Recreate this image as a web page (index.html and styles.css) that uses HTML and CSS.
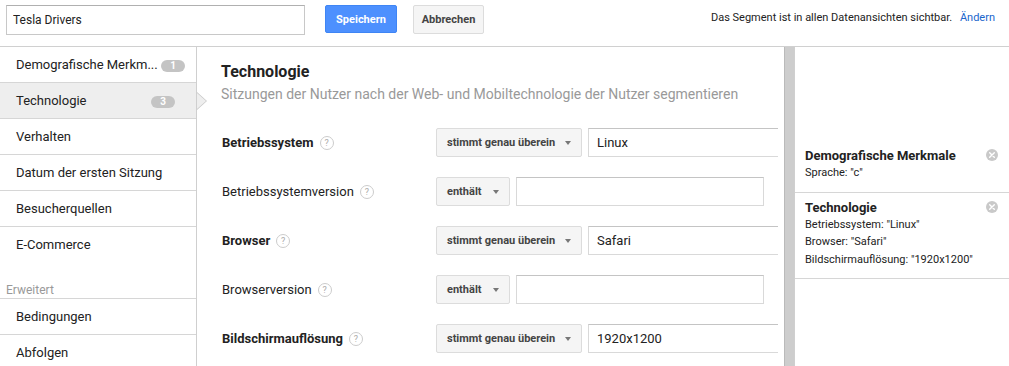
FILE: index.html
```html
<!DOCTYPE html>
<html lang="de">
<head>
<meta charset="utf-8">
<title>Segment</title>
<link rel="stylesheet" href="styles.css">
</head>
<body>
<header class="topbar">
  <input class="name-input" type="text" value="Tesla Drivers">
  <button class="btn btn-primary">Speichern</button>
  <button class="btn btn-default">Abbrechen</button>
  <div class="visibility">Das Segment ist in allen Datenansichten sichtbar. <a class="link">Ändern</a></div>
</header>
<div class="workspace">
  <nav class="nav">
    <div class="nav-item"><span class="nav-label" title="Demografische Merkmale">Demografische Merkm...</span><span class="badge">1</span></div>
    <div class="nav-item active"><span class="nav-label">Technologie</span><span class="badge">3</span></div>
    <div class="nav-item"><span class="nav-label">Verhalten</span></div>
    <div class="nav-item"><span class="nav-label">Datum der ersten Sitzung</span></div>
    <div class="nav-item"><span class="nav-label">Besucherquellen</span></div>
    <div class="nav-item last"><span class="nav-label">E-Commerce</span></div>
    <div class="nav-group">Erweitert</div>
    <div class="nav-item"><span class="nav-label">Bedingungen</span></div>
    <div class="nav-item"><span class="nav-label">Abfolgen</span></div>
  </nav>
  <main class="main">
    <h1 class="title">Technologie</h1>
    <p class="subtitle">Sitzungen der Nutzer nach der Web- und Mobiltechnologie der Nutzer segmentieren</p>
    <div class="form">
      <div class="row">
        <div class="label strong">Betriebssystem <span class="help">?</span></div>
        <div class="select wide"><span>stimmt genau überein</span><span class="caret"></span></div>
        <div class="field">Linux</div>
      </div>
      <div class="row">
        <div class="label">Betriebssystemversion <span class="help">?</span></div>
        <div class="select narrow"><span>enthält</span><span class="caret"></span></div>
        <div class="field"></div>
      </div>
      <div class="row">
        <div class="label strong">Browser <span class="help">?</span></div>
        <div class="select wide"><span>stimmt genau überein</span><span class="caret"></span></div>
        <div class="field">Safari</div>
      </div>
      <div class="row">
        <div class="label">Browserversion <span class="help">?</span></div>
        <div class="select narrow"><span>enthält</span><span class="caret"></span></div>
        <div class="field"></div>
      </div>
      <div class="row">
        <div class="label strong">Bildschirmauflösung <span class="help">?</span></div>
        <div class="select wide"><span>stimmt genau überein</span><span class="caret"></span></div>
        <div class="field">1920x1200</div>
      </div>
    </div>
  </main>
  <div class="gutter"></div>
  <div class="scrollbar"></div>
  <aside class="side">
    <div class="card">
      <div class="card-title">Demografische Merkmale</div>
      <div class="card-line">Sprache: "c"</div>
      <svg class="close" width="12" height="12" viewBox="0 0 12 12"><circle cx="6" cy="6" r="6" fill="#c9c9c9"/><path d="M3.7 3.7L8.3 8.3M8.3 3.7L3.7 8.3" stroke="#fff" stroke-width="1.4" stroke-linecap="round"/></svg>
    </div>
    <div class="card">
      <div class="card-title">Technologie</div>
      <div class="card-line">Betriebssystem: "Linux"</div>
      <div class="card-line">Browser: "Safari"</div>
      <div class="card-line">Bildschirmauflösung: "1920x1200"</div>
      <svg class="close" width="12" height="12" viewBox="0 0 12 12"><circle cx="6" cy="6" r="6" fill="#c9c9c9"/><path d="M3.7 3.7L8.3 8.3M8.3 3.7L3.7 8.3" stroke="#fff" stroke-width="1.4" stroke-linecap="round"/></svg>
    </div>
  </aside>
</div>
</body>
</html>
```
FILE: styles.css
```css
* { box-sizing: border-box; }
body {
  margin: 0;
  width: 1009px;
  height: 366px;
  overflow: hidden;
  font-family: Roboto, "Noto Sans", Arial, sans-serif;
  color: #222;
  background: #fff;
}
.topbar {
  display: flex;
  align-items: flex-start;
  height: 47px;
  padding: 5px 14px 0 6px;
  border-bottom: 1px solid #d0d0d0;
}
.name-input {
  width: 299px;
  height: 30px;
  margin: 0;
  padding: 0 6px;
  border: 1px solid #c8c8c8;
  border-top-color: #b0b0b0;
  font-family: inherit;
  font-size: 12px;
  color: #222;
  outline: none;
}
.btn {
  height: 28px;
  margin: 0;
  padding: 0;
  border-radius: 2px;
  font-family: inherit;
  font-size: 11px;
  font-weight: 700;
}
.btn-primary {
  width: 72px;
  margin-left: 20px;
  background: #4d90fe;
  border: 1px solid #3f85f4;
  color: #fff;
}
.btn-default {
  width: 71px;
  height: 29px;
  margin-left: 16px;
  background: #f5f5f5;
  border: 1px solid #dcdcdc;
  color: #444;
}
.visibility {
  margin-left: auto;
  margin-top: 6px;
  font-size: 11px;
  line-height: 14px;
  color: #222;
}
.link {
  margin-left: 5px;
  color: #1a66cc;
}
.workspace {
  display: flex;
  height: 319px;
}
.nav {
  flex: 0 0 197px;
  width: 197px;
  min-width: 0;
  border-right: 1px solid #cfcfcf;
}
.nav-item {
  position: relative;
  display: flex;
  align-items: center;
  height: 36px;
  padding: 0 11px 0 16px;
  border-bottom: 1px solid #d6d6d6;
  font-size: 13px;
}
.nav-item.last { border-bottom-color: transparent; }
.nav-item.active {
  background: #eee;
  padding-right: 21px;
}
.nav-item.active::before,
.nav-item.active::after {
  content: "";
  position: absolute;
  top: 50%;
  transform: translateY(-50%);
  width: 0;
  height: 0;
  z-index: 2;
}
.nav-item.active::before {
  right: -11px;
  border-left: 10px solid #c8c8c8;
  border-top: 9px solid transparent;
  border-bottom: 9px solid transparent;
}
.nav-item.active::after {
  right: -10px;
  border-left: 9px solid #eee;
  border-top: 8px solid transparent;
  border-bottom: 8px solid transparent;
}
.nav-label {
  flex: 1;
  min-width: 0;
  white-space: nowrap;
}
.badge {
  flex: 0 0 24px;
  height: 12px;
  margin-left: 4px;
  margin-top: 3px;
  border-radius: 6px;
  background: #c4c4c4;
  color: #fff;
  font-size: 10px;
  font-weight: 700;
  line-height: 12px;
  text-align: center;
}
.nav-group {
  height: 36px;
  padding: 20px 0 0 6px;
  border-bottom: 1px solid #d6d6d6;
  font-size: 12px;
  line-height: 14px;
  color: #999;
}
.main {
  flex: 0 0 581px;
  width: 581px;
  min-width: 0;
  overflow: hidden;
  padding: 15px 0 0 24px;
}
.title {
  margin: 0;
  font-size: 16px;
  line-height: 20px;
  font-weight: 700;
}
.subtitle {
  margin: 3px 0 0;
  font-size: 14px;
  line-height: 18px;
  color: #999;
}
.form { margin-top: 25px; }
.row {
  display: flex;
  align-items: center;
  height: 29px;
  margin-bottom: 20px;
}
.label {
  flex: 0 0 215px;
  display: flex;
  align-items: center;
  gap: 6px;
  padding-left: 1px;
  font-size: 13px;
}
.label.strong { font-weight: 700; }
.help {
  width: 14px;
  height: 14px;
  border: 1px solid #ccc;
  border-radius: 50%;
  font-size: 9px;
  font-weight: 400;
  line-height: 12px;
  text-align: center;
  color: #aaa;
}
.select {
  display: flex;
  align-items: center;
  flex-shrink: 0;
  height: 29px;
  padding: 0 10px;
  background: #f5f5f5;
  border: 1px solid #dcdcdc;
  border-radius: 2px;
  font-size: 11px;
  font-weight: 700;
  color: #444;
}
.select.wide { width: 146px; }
.select.narrow { width: 74px; }
.caret {
  margin-left: auto;
  width: 0;
  height: 0;
  border-left: 3.5px solid transparent;
  border-right: 3.5px solid transparent;
  border-top: 4px solid #777;
  margin-top: 1px;
}
.field {
  flex: 0 0 248px;
  height: 29px;
  margin-left: 6px;
  padding: 0 8px;
  border: 1px solid #d9d9d9;
  border-top-color: #c4c4c4;
  font-size: 13px;
  line-height: 27px;
  color: #222;
}
.gutter { flex: 0 0 6px; }
.scrollbar {
  flex: 0 0 10px;
  background: #cdcdcd;
  border-left: 1px solid #bababa;
}
.side {
  flex: 0 0 215px;
  width: 215px;
  min-width: 0;
  border-left: 1px solid #cfcfcf;
  padding-top: 94px;
}
.card {
  position: relative;
  padding: 7px 11px 10px 10px;
  border-bottom: 1px solid #d6d6d6;
}
.card-title {
  font-size: 13px;
  font-weight: 700;
  line-height: 16px;
}
.card-line {
  font-size: 11px;
  line-height: 17.5px;
}
.close {
  position: absolute;
  top: 8px;
  right: 11px;
}
```
